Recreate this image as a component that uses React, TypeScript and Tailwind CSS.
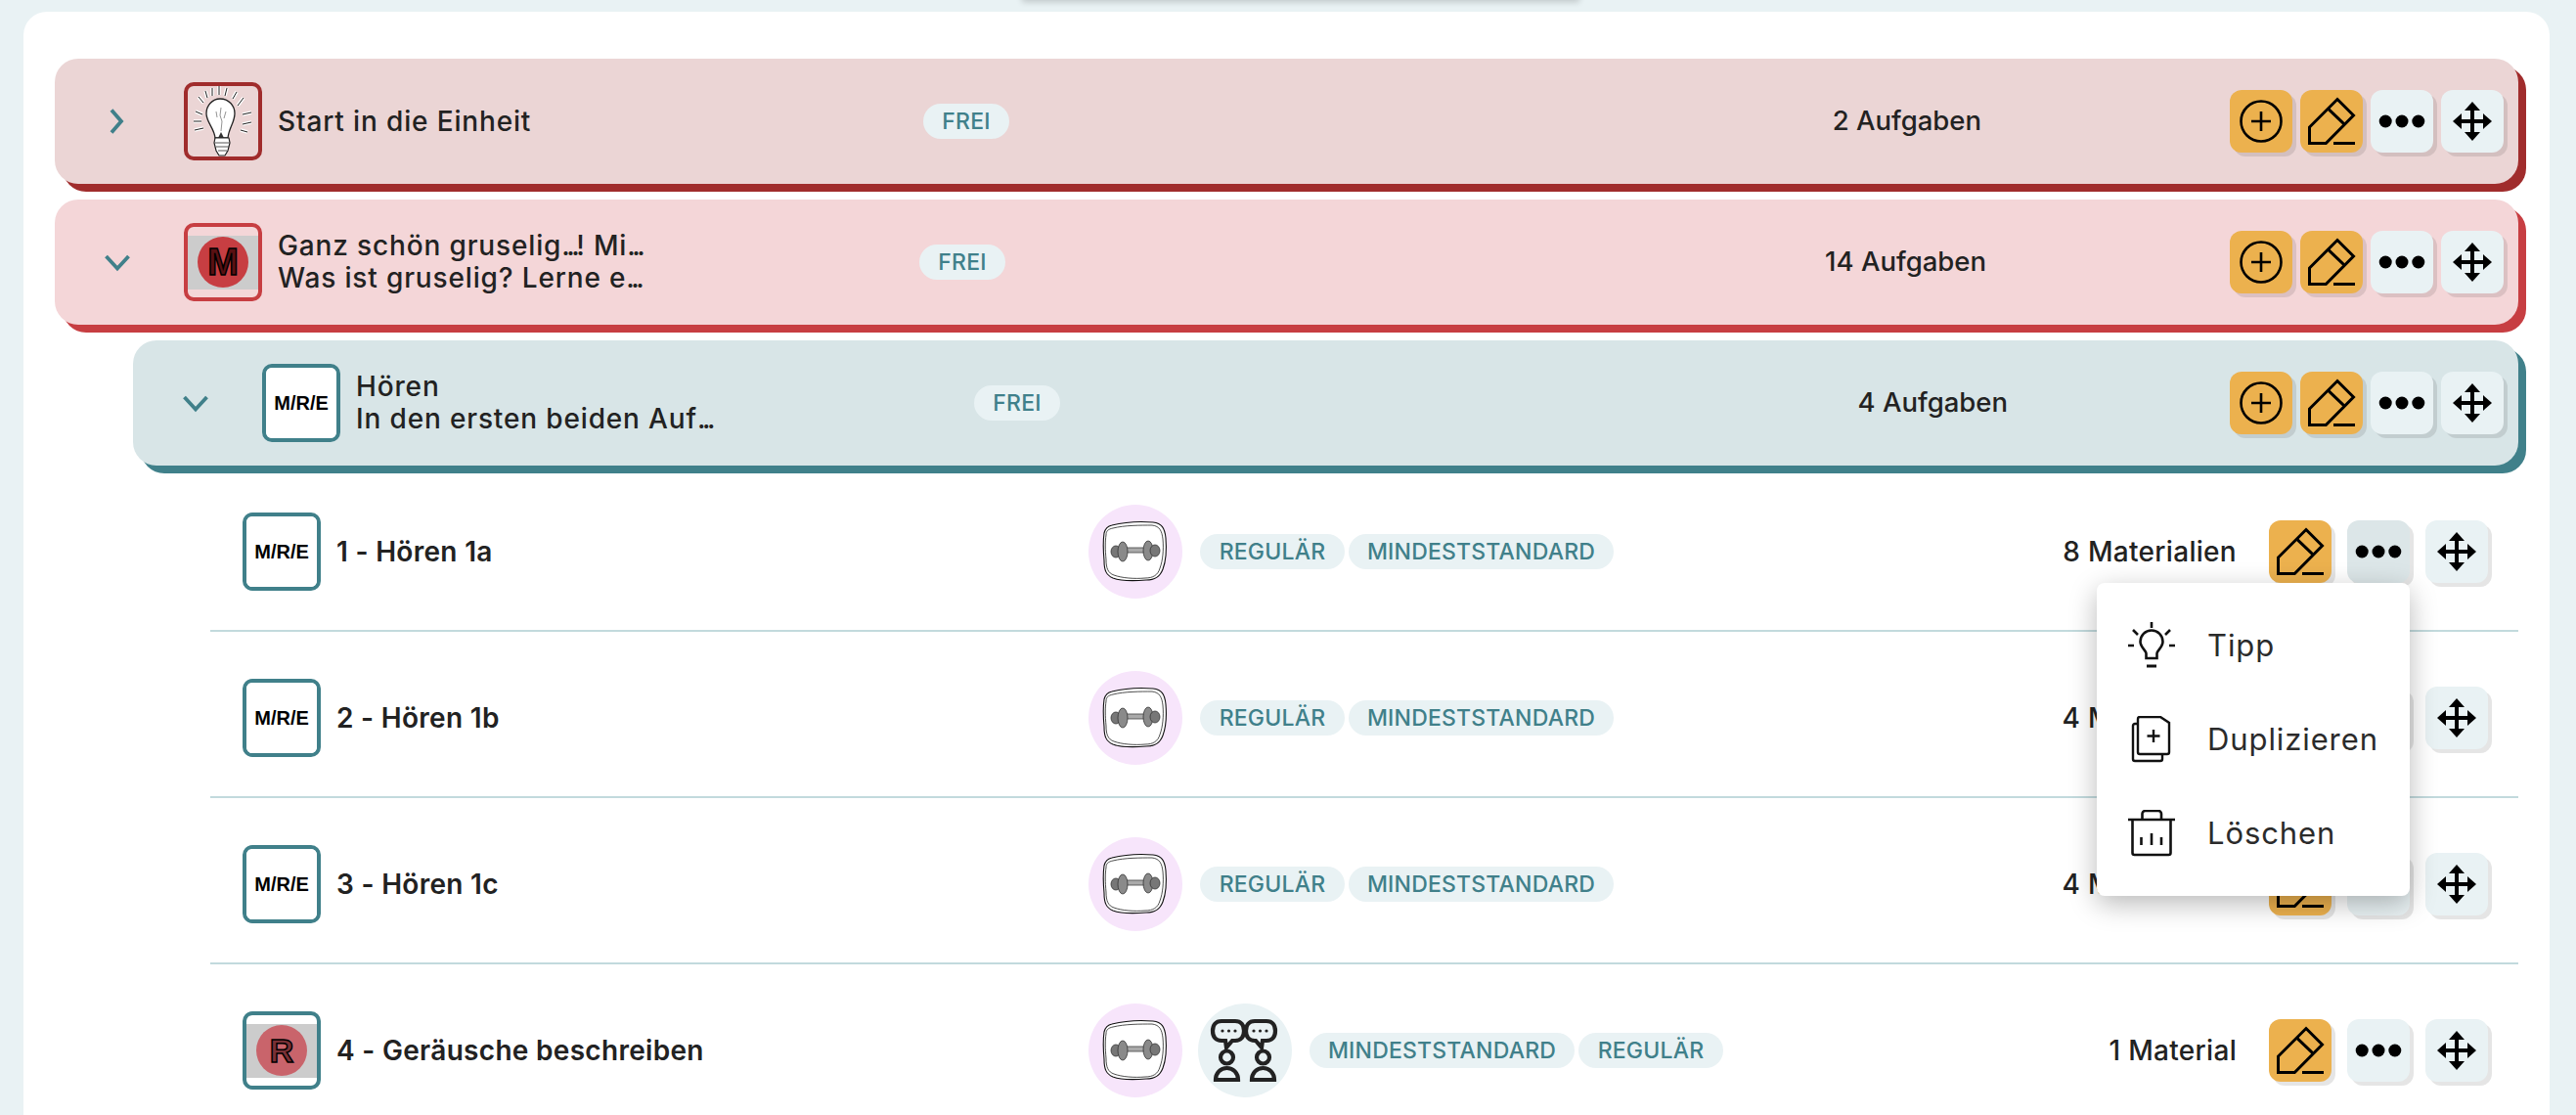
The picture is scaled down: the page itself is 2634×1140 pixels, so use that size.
import React from 'react';

type Tone = { bg: string; border: string };

function PlusIcon() {
  return (
    <svg width="64" height="64" viewBox="0 0 64 64" fill="none" stroke="#000" strokeWidth="2.6">
      <circle cx="32" cy="32" r="20.5" />
      <path d="M32 22v20M22 32h20" />
    </svg>
  );
}

function EditIcon() {
  return (
    <svg width="64" height="64" viewBox="0 0 64 64" fill="none" stroke="#000" strokeWidth="3">
      <path d="M38 9.500 54.500 26 26.300 54.500H9.500V38Z" />
      <path d="M29 19.700 44.700 34.700" />
      <path d="M34 54.500H56" />
    </svg>
  );
}

function DotsIcon() {
  return (
    <svg width="64" height="64" viewBox="0 0 64 64" fill="#000">
      <circle cx="15.200" cy="32" r="6.500" />
      <circle cx="32" cy="32" r="6.500" />
      <circle cx="48.800" cy="32" r="6.500" />
    </svg>
  );
}

function MoveIcon() {
  return (
    <svg width="64" height="64" viewBox="0 0 64 64" fill="#000">
      <path d="M30 18h4v12h12v4H34v12h-4V34H18v-4h12Z" />
      <path d="M32 12 40 21 H24Z" />
      <path d="M32 52 24 43H40Z" />
      <path d="M12 32 21 24V40Z" />
      <path d="M52 32 43 40V24Z" />
    </svg>
  );
}

function ActionButton({ kind, pressed }: { kind: 'plus' | 'edit' | 'dots' | 'move'; pressed?: boolean }) {
  const amber = kind === 'plus' || kind === 'edit';
  return (
    <button
      type="button"
      className={`block w-16 h-16 shrink-0 rounded-xl shadow-[4px_4px_0_rgba(0,0,0,0.1)] ${
        amber ? 'bg-[#ecb14e]' : pressed ? 'bg-[#dce6e8]' : 'bg-[#e9f2f4]'
      }`}
    >
      {kind === 'plus' && <PlusIcon />}
      {kind === 'edit' && <EditIcon />}
      {kind === 'dots' && <DotsIcon />}
      {kind === 'move' && <MoveIcon />}
    </button>
  );
}

function Chevron({ open }: { open: boolean }) {
  return (
    <svg width="48" height="48" viewBox="0 0 48 48" fill="none" stroke="#40808a" strokeWidth="3.800">
      {open ? <path d="M12.500 18 24 30.500 35.500 18" /> : <path d="M18 12.500 28 24 18 35.500" />}
    </svg>
  );
}

function BulbArt() {
  const rays = [
    'M29 6v8', 'M36 4v9', 'M44 6l-2 8', 'M54 10l-4 7', 'M61 16l-6 8', 'M15 15l5 6', 'M22 9l2 7',
    'M12 30l7 3', 'M10 40h8', 'M11 49l9-2', 'M60 33l9-2', 'M60 43l9-2', 'M58 49l7 2',
  ];
  return (
    <svg width="72" height="72" viewBox="4 4 72 72" fill="none">
      {rays.map((d) => (
        <g key={d}>
          <path d={d} stroke="#fff" strokeWidth="3.600" />
          <path d={d} stroke="#222" strokeWidth="1" />
        </g>
      ))}
      <path
        d="M37 17c9 0 15 7 15 15 0 9-6 15-7 25H32c-1-10-9-16-9-25 0-8 6-15 14-15Z"
        fill="#fff"
        stroke="#222"
        strokeWidth="1.300"
      />
      <path d="M38 26l-1 8 2 6-1 10M33 30l1 6M43 30l-2 7" stroke="#888" strokeWidth="0.900" />
      <path d="M35 57l3-6 3 6Z" fill="#333" />
      <path
        d="M32 57h14l1 5-1 4-1 4-3 5h-6l-3-5-1-4-1-4Z"
        fill="#fff"
        stroke="#222"
        strokeWidth="1.200"
      />
      <path d="M32 62h15M33 66h13M35 70h9" stroke="#555" strokeWidth="1" />
    </svg>
  );
}

function LevelBadge({ letter, circle, letterClass }: { letter: string; circle: string; letterClass: string }) {
  return (
    <div className="w-full h-[55px] bg-[#cccccc] flex items-center justify-center">
      <div className={`w-[52px] h-[52px] rounded-full flex items-center justify-center ${circle}`}>
        <span className={`font-['Liberation_Sans',sans-serif] font-bold leading-none [-webkit-text-stroke:1.5px_#000] ${letterClass}`}>
          {letter}
        </span>
      </div>
    </div>
  );
}

function IconBox({ border, children }: { border: string; children: React.ReactNode }) {
  return (
    <div className={`w-20 h-20 shrink-0 rounded-[10px] border-[4px] overflow-hidden flex items-center justify-center ${border}`}>
      {children}
    </div>
  );
}

function MreLabel() {
  return (
    <span className="w-full h-full bg-white flex items-center justify-center font-['Liberation_Sans',sans-serif] font-bold text-[20px] text-black">
      M/R/E
    </span>
  );
}

function Tag({ label, className }: { label: string; className?: string }) {
  return (
    <span
      className={`h-9 shrink-0 rounded-full bg-[#e9f2f4] flex items-center justify-center text-[#40808a] font-medium text-[23px] tracking-[0.2px] leading-none ${className ?? ''}`}
    >
      {label}
    </span>
  );
}

// the dots in the original font sit much tighter than in Inter
function TitleLine({ text }: { text: string }) {
  const parts = text.split('...');
  return (
    <div>
      {parts.map((p, i) => (
        <React.Fragment key={i}>
          {p}
          {i < parts.length - 1 && <span className="tracking-[-3.5px]">...</span>}
        </React.Fragment>
      ))}
    </div>
  );
}

function GroupRow({
  tone,
  open,
  indent,
  icon,
  lines,
  titleWidth,
  count,
  countGap,
}: {
  tone: Tone;
  open: boolean;
  indent?: string;
  icon: React.ReactNode;
  lines: string[];
  titleWidth: string;
  count: string;
  countGap: string;
}) {
  return (
    <div className={`h-32 rounded-3xl flex items-center pl-10 pr-[15px] mb-4 ${tone.bg} ${indent ?? ''}`}>
      <Chevron open={open} />
      <div className="ml-[44px]">{icon}</div>
      <div className={`ml-4 shrink-0 text-[28px] tracking-[0.85px] leading-[33px] font-medium text-[#222] ${titleWidth}`}>
        {lines.map((l) => (
          <TitleLine key={l} text={l} />
        ))}
      </div>
      <Tag label="FREI" className="w-[88px]" />
      <div className={`ml-auto text-[27.5px] font-medium text-[#222] ${countGap}`}>{count}</div>
      <div className="flex gap-2">
        <ActionButton kind="plus" />
        <ActionButton kind="edit" />
        <ActionButton kind="dots" />
        <ActionButton kind="move" />
      </div>
    </div>
  );
}

function DumbbellIcon() {
  return (
    <div className="w-24 h-24 shrink-0 rounded-full bg-[#f7e5fb] flex items-center justify-center">
      <svg width="96" height="96" viewBox="0 0 96 96" fill="none">
        <path
          d="M24 21c12-3 30-4 42-3 9 1 12 6 13 16 1 12 0 24-3 32-3 8-8 11-17 11-12 1-26 1-34-2-7-3-9-8-9-18-1-11-1-21 0-28 1-4 3-7 8-8Z"
          fill="#fff"
          stroke="#111"
          strokeWidth="1.100"
        />
        <path
          d="M25 24c12-3 28-3 40-3 8 1 10 6 11 14 1 11 0 22-3 30-2 7-7 10-15 10-11 1-24 0-32-3-6-2-8-7-8-16-1-10-1-19 0-25 0-4 2-6 7-7Z"
          stroke="#222"
          strokeWidth="0.800"
        />
        <rect x="38" y="44" width="22" height="5" fill="#aaa" stroke="#444" strokeWidth="0.800" />
        <ellipse cx="28" cy="48" rx="5" ry="6" fill="#777" stroke="#333" strokeWidth="0.800" />
        <ellipse cx="35" cy="48" rx="5" ry="10" fill="#8a8a8a" stroke="#333" strokeWidth="0.800" />
        <ellipse cx="61" cy="47" rx="5" ry="10" fill="#8a8a8a" stroke="#333" strokeWidth="0.800" />
        <ellipse cx="68" cy="47" rx="5" ry="6" fill="#777" stroke="#333" strokeWidth="0.800" />
      </svg>
    </div>
  );
}

function PartnerIcon() {
  return (
    <div className="w-24 h-24 shrink-0 rounded-full bg-[#e9f2f4] flex items-center justify-center">
      <svg width="96" height="96" viewBox="0 0 96 96" fill="none" stroke="#222" strokeWidth="4.200">
        <path d="M24 18h14c6 0 9 4 9 10s-3 10-9 10h-3l-6 7-1-7h-4c-6 0-9-4-9-10s3-10 9-10Z" />
        <path d="M58 18h12c6 0 9 4 9 10s-3 10-9 10h-4l-1 7-6-7h-1c-6 0-9-4-9-10s3-10 9-10Z" />
        <g fill="#222" stroke="none">
          <circle cx="25" cy="28" r="1.600" />
          <circle cx="31.500" cy="28" r="1.600" />
          <circle cx="38" cy="28" r="1.600" />
          <circle cx="57" cy="28" r="1.600" />
          <circle cx="63.500" cy="28" r="1.600" />
          <circle cx="70" cy="28" r="1.600" />
        </g>
        <circle cx="29.500" cy="55" r="6.500" />
        <circle cx="66.500" cy="55" r="6.500" />
        <path d="M18 78c0-7 5-12 11.500-12S41 71 41 78Z" />
        <path d="M55 78c0-7 5-12 11.500-12S78 71 78 78Z" />
      </svg>
    </div>
  );
}

function ContextMenu() {
  return (
    <div className="absolute top-full right-0 z-10 w-80 h-80 py-4 rounded-lg bg-white shadow-[0_8px_28px_rgba(0,0,0,0.28)] text-[31px] text-[#2b2b2b] tracking-[0.9px]">
      <div className="h-24 flex items-center pl-8 gap-[33px]">
        <svg width="48" height="48" viewBox="0 0 48 48" fill="none" stroke="#111" strokeWidth="2.600" className="shrink-0">
          <path d="M24 0v6M0 24h6M42 24h6M5 8l5 5M43 8l-5 5" />
          <path d="M18.500 37v-5c0-3-6-6-6-12a11.500 11.500 0 0 1 23 0c0 6-6 9-6 12v5Z" />
          <path d="M19 45h10" strokeWidth="3" />
        </svg>
        <span>Tipp</span>
      </div>
      <div className="h-24 flex items-center pl-8 gap-[33px]">
        <svg width="48" height="48" viewBox="0 0 48 48" fill="none" stroke="#111" strokeWidth="2.400" className="shrink-0">
          <path d="M10 8H7a2 2 0 0 0-2 2v34a2 2 0 0 0 2 2h26a2 2 0 0 0 2-2v-5" />
          <path d="M12 1h21l9 6v30a2 2 0 0 1-2 2H12a2 2 0 0 1-2-2V3a2 2 0 0 1 2-2Z" />
          <path d="M26 14v13M19.500 20.500h13" />
        </svg>
        <span>Duplizieren</span>
      </div>
      <div className="h-24 flex items-center pl-8 gap-[33px]">
        <svg width="48" height="48" viewBox="0 0 48 48" fill="none" stroke="#111" strokeWidth="2.600" className="shrink-0">
          <path d="M0 10h48" />
          <path d="M14.500 10V4a3 3 0 0 1 3-3h13.500a3 3 0 0 1 3 3v6" />
          <path d="M4.500 10v34a2 2 0 0 0 2 2h35a2 2 0 0 0 2-2V10" />
          <path d="M13.500 28v8M24 24v12M34 28v8" />
        </svg>
        <span>Löschen</span>
      </div>
    </div>
  );
}

function TaskRow({
  icon,
  title,
  circles,
  tags,
  count,
  menuOpen,
  last,
}: {
  icon: React.ReactNode;
  title: string;
  circles: React.ReactNode;
  tags: { label: string; width: string }[];
  count: string;
  menuOpen?: boolean;
  last?: boolean;
}) {
  return (
    <div className={`flex items-center ml-[159px] pl-[33px] pr-[31px] pt-10 pb-8 ${last ? '' : 'border-b-2 border-[#c2dadd]'}`}>
      {icon}
      <div className="ml-4 w-[769px] shrink-0 text-[28px] tracking-[0.3px] font-semibold text-[#222]">{title}</div>
      <div className="flex gap-4">{circles}</div>
      <div className="ml-[18px] flex gap-1">
        {tags.map((t) => (
          <Tag key={t.label} label={t.label} className={t.width} />
        ))}
      </div>
      <div className="ml-auto mr-[33px] text-[28px] tracking-[0.3px] font-medium text-[#222]">{count}</div>
      <div className="flex gap-4">
        <ActionButton kind="edit" />
        <div className="relative">
          <ActionButton kind="dots" pressed={menuOpen} />
          {menuOpen && <ContextMenu />}
        </div>
        <ActionButton kind="move" />
      </div>
    </div>
  );
}

const regular = { label: 'REGULÄR', width: 'w-[148px]' };
const minimum = { label: 'MINDESTSTANDARD', width: 'w-[271px]' };

export default function App() {
  return (
    <div className="relative h-[1140px] overflow-hidden bg-[#e9f2f4] pt-3 px-6 font-['Inter',sans-serif]">
      <div className="absolute -top-4 left-[1045px] w-[570px] h-4 shadow-[0_2px_6px_rgba(0,0,0,0.18)]" />
      <div className="w-[2583px] h-[1300px] rounded-t-3xl bg-white pt-12 pl-8 pr-8">
        <GroupRow
          tone={{ bg: 'bg-[#ebd5d5] shadow-[8px_8px_0_#a02c2c]', border: '' }}
          open={false}
          icon={<IconBox border="border-[#a02c2c]"><BulbArt /></IconBox>}
          lines={['Start in die Einheit']}
          titleWidth="w-[660px]"
          count="2 Aufgaben"
          countGap="mr-[254px]"
        />
        <GroupRow
          tone={{ bg: 'bg-[#f4d6d8] shadow-[8px_8px_0_#c73e42]', border: '' }}
          open
          icon={
            <IconBox border="border-[#c73e42]">
              <LevelBadge letter="M" circle="bg-[#c73e42]" letterClass="text-[38px] text-[#5a1012]" />
            </IconBox>
          }
          lines={['Ganz schön gruselig...! Mi...', 'Was ist gruselig? Lerne e...']}
          titleWidth="w-[656px]"
          count="14 Aufgaben"
          countGap="mr-[249px]"
        />
        <GroupRow
          tone={{ bg: 'bg-[#d8e5e7] shadow-[8px_8px_0_#40808a]', border: '' }}
          open
          indent="ml-20 !mb-0"
          icon={<IconBox border="border-[#40808a]"><MreLabel /></IconBox>}
          lines={['Hören', 'In den ersten beiden Auf...']}
          titleWidth="w-[632px]"
          count="4 Aufgaben"
          countGap="mr-[227px]"
        />
        <TaskRow
          icon={<IconBox border="border-[#40808a]"><MreLabel /></IconBox>}
          title="1 - Hören 1a"
          circles={<DumbbellIcon />}
          tags={[regular, minimum]}
          count="8 Materialien"
          menuOpen
        />
        <TaskRow
          icon={<IconBox border="border-[#40808a]"><MreLabel /></IconBox>}
          title="2 - Hören 1b"
          circles={<DumbbellIcon />}
          tags={[regular, minimum]}
          count="4 Materialien"
        />
        <TaskRow
          icon={<IconBox border="border-[#40808a]"><MreLabel /></IconBox>}
          title="3 - Hören 1c"
          circles={<DumbbellIcon />}
          tags={[regular, minimum]}
          count="4 Materialien"
        />
        <TaskRow
          icon={
            <IconBox border="border-[#40808a]">
              <LevelBadge letter="R" circle="bg-[#c9646b]" letterClass="text-[34px] text-[#7a3035]" />
            </IconBox>
          }
          title="4 - Geräusche beschreiben"
          circles={<><DumbbellIcon /><PartnerIcon /></>}
          tags={[minimum, regular]}
          count="1 Material"
          last
        />
      </div>
    </div>
  );
}
